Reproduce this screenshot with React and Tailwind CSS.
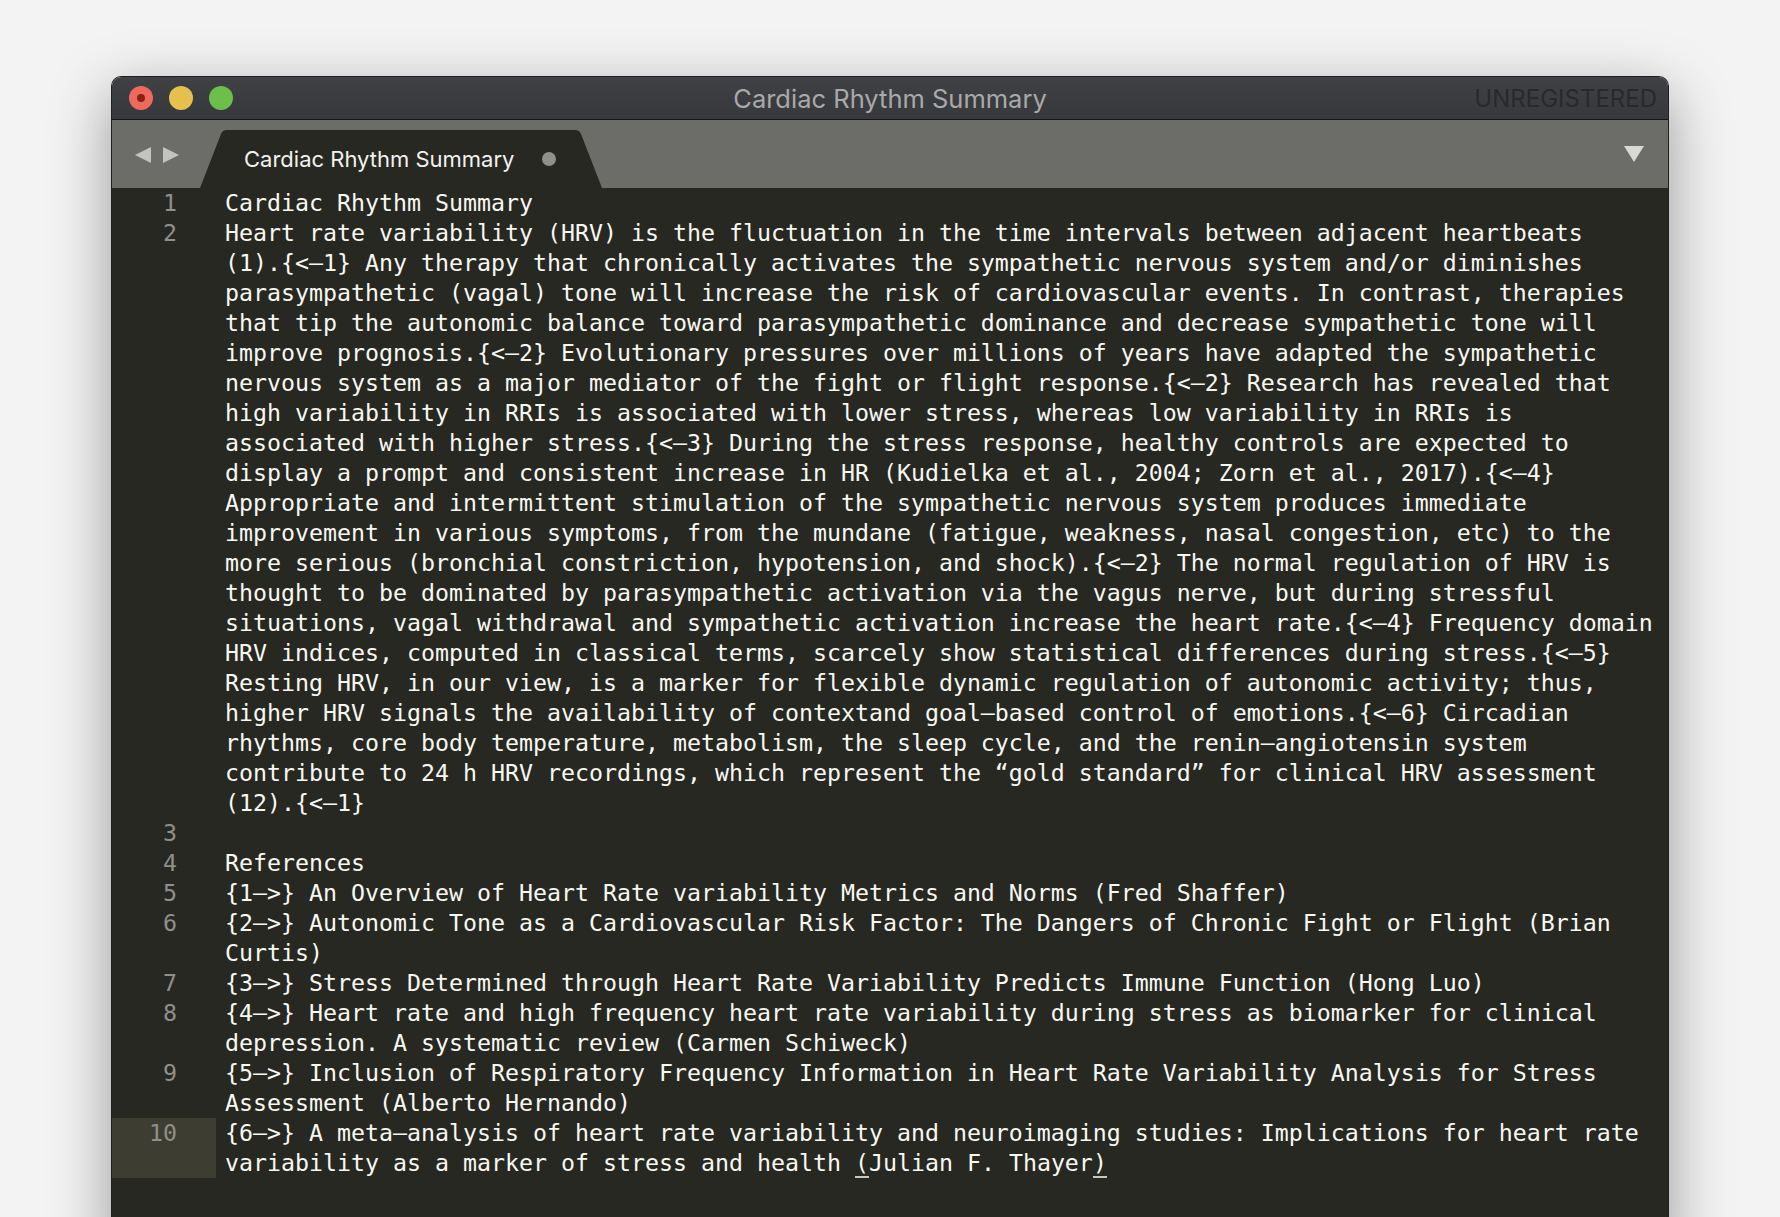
import React from "react";

const lines = [
  { n: 1, text: ["Cardiac Rhythm Summary"] },
  {
    n: 2,
    text: [
      "Heart rate variability (HRV) is the fluctuation in the time intervals between adjacent heartbeats",
      "(1).{<–1} Any therapy that chronically activates the sympathetic nervous system and/or diminishes",
      "parasympathetic (vagal) tone will increase the risk of cardiovascular events. In contrast, therapies",
      "that tip the autonomic balance toward parasympathetic dominance and decrease sympathetic tone will",
      "improve prognosis.{<–2} Evolutionary pressures over millions of years have adapted the sympathetic",
      "nervous system as a major mediator of the fight or flight response.{<–2} Research has revealed that",
      "high variability in RRIs is associated with lower stress, whereas low variability in RRIs is",
      "associated with higher stress.{<–3} During the stress response, healthy controls are expected to",
      "display a prompt and consistent increase in HR (Kudielka et al., 2004; Zorn et al., 2017).{<–4}",
      "Appropriate and intermittent stimulation of the sympathetic nervous system produces immediate",
      "improvement in various symptoms, from the mundane (fatigue, weakness, nasal congestion, etc) to the",
      "more serious (bronchial constriction, hypotension, and shock).{<–2} The normal regulation of HRV is",
      "thought to be dominated by parasympathetic activation via the vagus nerve, but during stressful",
      "situations, vagal withdrawal and sympathetic activation increase the heart rate.{<–4} Frequency domain",
      "HRV indices, computed in classical terms, scarcely show statistical differences during stress.{<–5}",
      "Resting HRV, in our view, is a marker for flexible dynamic regulation of autonomic activity; thus,",
      "higher HRV signals the availability of contextand goal–based control of emotions.{<–6} Circadian",
      "rhythms, core body temperature, metabolism, the sleep cycle, and the renin–angiotensin system",
      "contribute to 24 h HRV recordings, which represent the \u201Cgold standard\u201D for clinical HRV assessment",
      "(12).{<–1}",
    ],
  },
  { n: 3, text: [""] },
  { n: 4, text: ["References"] },
  { n: 5, text: ["{1–>} An Overview of Heart Rate variability Metrics and Norms (Fred Shaffer)"] },
  {
    n: 6,
    text: [
      "{2–>} Autonomic Tone as a Cardiovascular Risk Factor: The Dangers of Chronic Fight or Flight (Brian",
      "Curtis)",
    ],
  },
  { n: 7, text: ["{3–>} Stress Determined through Heart Rate Variability Predicts Immune Function (Hong Luo)"] },
  {
    n: 8,
    text: [
      "{4–>} Heart rate and high frequency heart rate variability during stress as biomarker for clinical",
      "depression. A systematic review (Carmen Schiweck)",
    ],
  },
  {
    n: 9,
    text: [
      "{5–>} Inclusion of Respiratory Frequency Information in Heart Rate Variability Analysis for Stress",
      "Assessment (Alberto Hernando)",
    ],
  },
];

function TrafficLights() {
  return (
    <div className="flex items-center gap-[16px] pl-[17px]">
      <div className="flex h-[24px] w-[24px] items-center justify-center rounded-full bg-[#ee6a5f]">
        <div className="h-[8px] w-[8px] rounded-full bg-[#8e1d13]" />
      </div>
      <div className="h-[24px] w-[24px] rounded-full bg-[#e5c04f]" />
      <div className="h-[24px] w-[24px] rounded-full bg-[#6cbf4b]" />
    </div>
  );
}

function Tab() {
  return (
    <div className="relative ml-[21px] h-[58px] w-[402px]">
      <svg className="absolute inset-0" width="402" height="58" viewBox="0 0 402 58">
        <path d="M0 58 L21 4 Q22.5 0 27 0 L375 0 Q379.5 0 381 4 L402 58 Z" fill="#272822" />
      </svg>
      <div className="relative flex h-full items-center pl-[44px]">
        <span className="text-[22px] text-[#f2f2f0]" style={{ fontFamily: "Inter, 'Open Sans', sans-serif" }}>
          Cardiac Rhythm Summary
        </span>
        <div className="ml-auto mr-[46px] h-[14px] w-[14px] rounded-full bg-[#8f8f8c]" />
      </div>
    </div>
  );
}

function Row({ n, text, active, children }) {
  return (
    <div className="flex">
      <div
        className={
          "w-[104px] shrink-0 pr-[39px] text-right text-[#90908a] " + (active ? "bg-[#3e3d32]" : "")
        }
      >
        <div className="h-[30px]">{n}</div>
        {text.slice(1).map((_, i) => (
          <div key={i} className="h-[30px]" />
        ))}
      </div>
      <div className="pl-[9px] text-[#f8f8f2]">
        {children ||
          text.map((t, i) => (
            <div key={i} className="h-[30px] whitespace-pre">
              {t}
            </div>
          ))}
      </div>
    </div>
  );
}

export default function App() {
  return (
    <div className="h-screen w-full overflow-hidden bg-[#f3f3f3] pl-[111px] pt-[76px]">
      <div className="flex h-[1180px] w-[1558px] flex-col overflow-hidden rounded-t-[10px] border-x border-t border-[#202022] shadow-[0_18px_60px_rgba(0,0,0,0.38)]">
        {/* title bar */}
        <div
          className="grid h-[43px] grid-cols-[1fr_auto_1fr] items-center border-b border-[#151516] bg-gradient-to-b from-[#404145] to-[#37383b]"
          style={{ fontFamily: "Inter, 'Open Sans', sans-serif" }}
        >
          <TrafficLights />
          <div className="pt-[2px] text-[25.5px] text-[#a9a9aa]">Cardiac Rhythm Summary</div>
          <div className="pr-[11px] pt-[2px] text-right text-[24px] text-[#29292b]">UNREGISTERED</div>
        </div>

        {/* tab bar */}
        <div className="flex h-[68px] items-end bg-[#6c6d68]">
          <div className="flex gap-[12px] self-start pl-[23px] pt-[27px]">
            <svg width="16" height="16" viewBox="0 0 16 16">
              <path d="M16 0 L0 8 L16 16 Z" fill="#c3c3c1" />
            </svg>
            <svg width="16" height="16" viewBox="0 0 16 16">
              <path d="M0 0 L16 8 L0 16 Z" fill="#c3c3c1" />
            </svg>
          </div>
          <Tab />
          <div className="ml-auto self-start pr-[24px] pt-[26px]">
            <svg width="20" height="16" viewBox="0 0 20 16">
              <path d="M0 0 L20 0 L10 16 Z" fill="#d8d8d6" />
            </svg>
          </div>
        </div>

        {/* editor */}
        <div
          className="flex-1 bg-[#272822] text-[23.25px] leading-[30px]"
          style={{ fontFamily: "'DejaVu Sans Mono', monospace" }}
        >
          {lines.map((l) => (
            <Row key={l.n} n={l.n} text={l.text} />
          ))}
          <Row n={10} text={["", ""]} active>
            <div className="h-[30px] whitespace-pre">
              {"{6–>} A meta–analysis of heart rate variability and neuroimaging studies: Implications for heart rate"}
            </div>
            <div className="h-[30px] whitespace-pre">
              {"variability as a marker of stress and health "}
              <span className="border-b-2 border-[#c8c8c0]">(</span>
              {"Julian F. Thayer"}
              <span className="border-b-2 border-[#c8c8c0]">)</span>
            </div>
          </Row>
        </div>
      </div>
    </div>
  );
}
